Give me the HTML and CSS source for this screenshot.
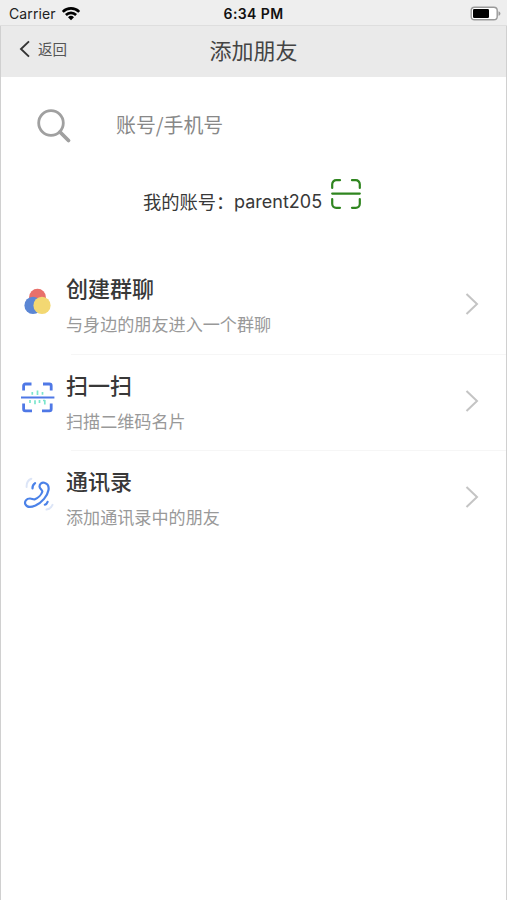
FILE: index.html
```html
<!DOCTYPE html>
<html lang="zh-CN">
<head>

    <meta charset="utf-8">
    <meta name="viewport" content="width=device-width, initial-scale=1.0">

    <title>添加朋友</title>

    <link rel="stylesheet" href="styles.css">

</head>

<body>
<div class="app">

    <div class="status-bar">
        <div class="status-left">
            <span class="carrier">Carrier</span>
            <svg width="20" height="15" viewBox="0 0 20 15" fill="none" stroke="#000" stroke-width="2.6">
                <path d="M1.8 5.8a11.6 11.6 0 0 1 16.4 0"/>
                <path d="M4.9 9a7.2 7.2 0 0 1 10.2 0"/>
                <path d="M10 14.2l-3-3a4.3 4.3 0 0 1 6 0z" fill="#000" stroke="none"/>
            </svg>
        </div>
        <span class="time">6:34 PM</span>
        <div class="status-right">
            <svg width="32" height="15" viewBox="0 0 32 15">
                <rect x="1.2" y="1.2" width="26" height="12.6" rx="3.4" fill="#fff" stroke="#999" stroke-width="1.4"/>
                <rect x="3" y="3" width="16" height="9" rx="1.2" fill="#000"/>
                <path d="M28.5 5.2c2.6 1 2.6 3.6 0 4.6z" fill="#999"/>
            </svg>
        </div>
    </div>

    <div class="page">

        <div class="nav">
            <a class="back">
                <svg width="12" height="18" viewBox="0 0 12 18" fill="none" stroke="#333" stroke-width="1.9">
                    <path d="M10 1.4L2 9l8 7.6"/>
                </svg>
                <span>返回</span>
            </a>
            <h1 class="nav-title">添加朋友</h1>
        </div>

        <div class="search">
            <svg width="36" height="36" viewBox="0 0 36 36" fill="none" stroke="#a0a0a0">
                <circle cx="15" cy="15" r="12.3" stroke-width="2.8"/>
                <path d="M24 24l8.5 8.5" stroke-width="3.8" stroke-linecap="round"/>
            </svg>
            <span class="search-text">账号/手机号</span>
        </div>

        <div class="account">
            <span class="account-label">我的账号：</span>
            <span class="account-name">parent205</span>
            <svg width="30" height="30" viewBox="0 0 30 30" fill="none" stroke="#2f851f" stroke-width="2.2" stroke-linecap="round">
                <path d="M1.2 9V5.2a4 4 0 0 1 4-4H9M21 1.2h3.8a4 4 0 0 1 4 4V9M28.8 20v4.8a4 4 0 0 1-4 4H21M9 28.8H5.2a4 4 0 0 1-4-4V20"/>
                <path d="M1.2 14.6h27.6"/>
            </svg>
        </div>

        <div class="list">

            <div class="item">
                <div class="item-icon">
                    <svg width="36" height="36" viewBox="0 0 36 36">
                        <circle cx="18.5" cy="13.2" r="8.4" fill="#e8706a"/>
                        <circle cx="14" cy="21.4" r="8.6" fill="#5b86d4"/>
                        <circle cx="23" cy="21.4" r="8.6" fill="#f3d872"/>
                    </svg>
                </div>
                <div class="item-text">
                    <div class="item-title">创建群聊</div>
                    <div class="item-desc">与身边的朋友进入一个群聊</div>
                </div>
                <svg class="arrow" width="14" height="24" viewBox="0 0 14 24"><path d="M1.5 2L12 12 1.5 22"/></svg>
            </div>

            <div class="item">
                <div class="item-icon">
                    <svg width="36" height="36" viewBox="0 2.5 36 36" fill="none">
                        <g stroke="#4f78e6" stroke-width="2.8">
                            <path d="M4.6 12V7.3a1.8 1.8 0 0 1 1.8-1.800H12.500M24 5.500h6.400a1.800 1.800 0 0 1 1.800 1.800V12M32.200 25V30.500a1.800 1.800 0 0 1-1.800 1.800H23M13 32.300H6.400a1.800 1.800 0 0 1-1.800-1.800V25"/>
                            <path d="M2 18.9h33.4" stroke-width="2"/>
                        </g>
                        <path d="M13.3 13.500v2.800M18.500 12v4.600M23.500 13.500v2.800M11 21.500v3M16 21.700v4M20.500 21.500v3M25.800 21.500v4.500M24 22h2" stroke="#7be6cd" stroke-width="1.7"/>
                    </svg>
                </div>
                <div class="item-text">
                    <div class="item-title">扫一扫</div>
                    <div class="item-desc">扫描二维码名片</div>
                </div>
                <svg class="arrow" width="14" height="24" viewBox="0 0 14 24"><path d="M1.5 2L12 12 1.5 22"/></svg>
            </div>

            <div class="item">
                <div class="item-icon">
                    <svg width="36" height="36" viewBox="0 1.5 36 36" fill="none" stroke="#4b82e8" stroke-width="2.2" stroke-linecap="round" stroke-linejoin="round">
                        <path d="M20.5 11C20.5 8 23 6.7 25.3 7.3C29 8.3 30 11.5 29.5 14.5C28.5 20.5 23 27 16.5 30C12.5 31.7 8 32 6.5 29C5 26 7.500 23 11 23C13 23 14.500 24.500 16 23.800C19 22.500 22.500 19 23.300 16.300C23.800 14.700 20.500 13.500 20.500 11z"/>
                        <path d="M13.5 13c-.2-2.4.8-4.200 2.600-5.400M25.800 29.200c1.400-.4 2.300-1.400 2.800-2.800"/>
                        <path d="M7.6 11.500C7.400 7.300 9 4.500 12.300 3.200M27.500 34c3-.4 5-2 6-4.600" stroke="#dce5f7" stroke-width="2"/>
                    </svg>
                </div>
                <div class="item-text">
                    <div class="item-title">通讯录</div>
                    <div class="item-desc">添加通讯录中的朋友</div>
                </div>
                <svg class="arrow" width="14" height="24" viewBox="0 0 14 24"><path d="M1.5 2L12 12 1.5 22"/></svg>
            </div>

        </div>

    </div>

</div>
</body>
</html>
```
FILE: styles.css
```css
* {
    box-sizing: border-box;
}

body {
    margin: 0;
    background: #fff;
    font-family: "Noto Sans CJK SC", sans-serif;
    color: #383838;
}

.app {
    height: 900px;
    display: flex;
    flex-direction: column;
}

.status-bar {
    height: 26px;
    display: grid;
    grid-template-columns: 1fr auto 1fr;
    align-items: center;
    padding: 1px 5px 0 9px;
    background: #eee;
    border-bottom: 1px solid #dedede;
    font-family: Inter, sans-serif;
    font-size: 14px;
    color: #222;
}

.status-left {
    display: flex;
    align-items: center;
    gap: 5px;
}

.carrier {
    letter-spacing: 0.1px;
}

.time {
    margin-right: 4px;
    font-weight: 600;
    letter-spacing: 0.4px;
    color: #111;
}

.status-right {
    display: flex;
    justify-content: flex-end;
}

.page {
    flex: 1;
    border-left: 1px solid #d0d0d0;
    border-right: 1px solid #d0d0d0;
}

.nav {
    height: 51px;
    display: grid;
    grid-template-columns: 1fr auto 1fr;
    align-items: center;
    padding: 0 18px 5px;
    background: #eaeaea;
}

.back {
    display: flex;
    align-items: center;
    gap: 7px;
    font-size: 14.5px;
    line-height: 20px;
    color: #555;
}

.nav-title {
    margin: 0;
    font-size: 22px;
    line-height: 30px;
    font-weight: 400;
    color: #444;
}

.search {
    height: 97px;
    display: flex;
    align-items: center;
    gap: 44px;
    padding-left: 35px;
}

.search-text {
    margin-top: -1px;
    font-size: 19.9px;
    line-height: 28px;
    color: #888;
}

.account {
    height: 84px;
    display: flex;
    align-items: flex-start;
    padding: 5px 0 0 142px;
    line-height: 46px;
    white-space: nowrap;
}

.account-label {
    width: 91px;
    margin-top: -1px;
    font-size: 18.3px;
}

.account-name {
    width: 97px;
    font-family: Inter, sans-serif;
    font-size: 18px;
}

.item {
    height: 96.5px;
    display: flex;
    align-items: center;
    padding: 0 27px 4px 18px;
    background: linear-gradient(#f6f6f6, #f6f6f6) 70px 100% / 100% 1px no-repeat;
}

.item:last-child {
    background: none;
}

.item-icon {
    width: 47px;
    height: 36px;
    margin-top: -4px;
}

.item-text {
    flex: 1;
}

.item-title {
    font-size: 22px;
    line-height: 32px;
    font-weight: 500;
}

.item-desc {
    margin-top: 8px;
    font-size: 17.1px;
    line-height: 26px;
    color: #999;
}

.arrow {
    fill: none;
    stroke: #c4c4c4;
    stroke-width: 2;
}
```
